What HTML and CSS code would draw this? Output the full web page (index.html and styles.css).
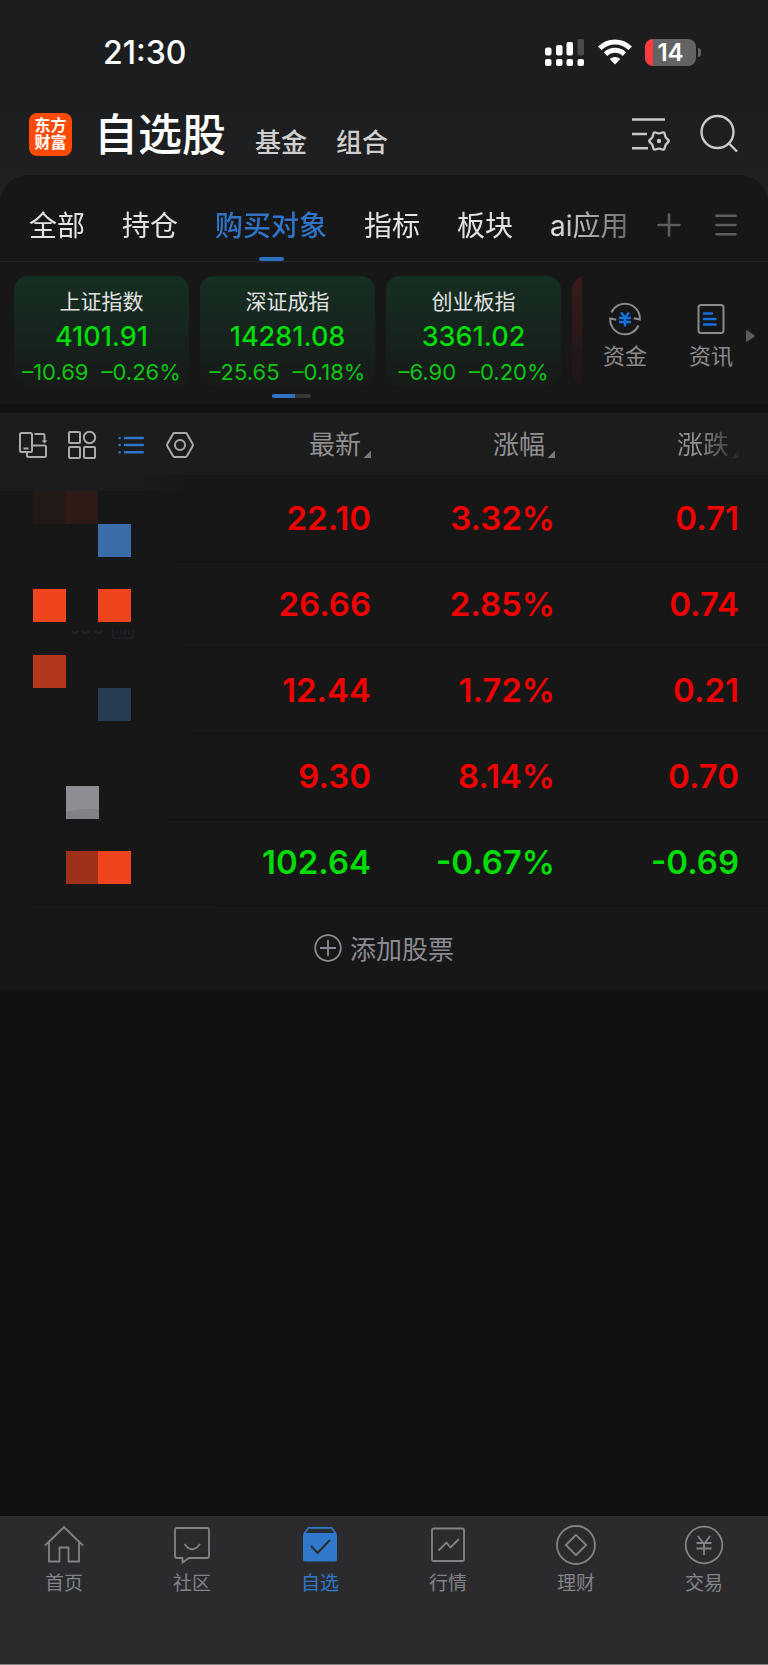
FILE: index.html
```html
<!DOCTYPE html>
<html lang="zh-CN">
<head>
    <meta charset="UTF-8">
    <meta name="viewport" content="width=device-width, initial-scale=1.0">
    <title>自选股</title>
    <link rel="stylesheet" href="styles.css">
</head>
<body>
    <header class="top">
        <div class="status">
            <time class="clock">21:30</time>
            <svg class="signal" width="39" height="27" viewBox="0 0 39 27">
                <g fill="#fff">
                    <rect x="0" y="8.500" width="6.500" height="8" rx="2"/>
                    <rect x="11" y="6" width="6.500" height="10.500" rx="2"/>
                    <rect x="21.500" y="3" width="6.500" height="13.500" rx="2"/>
                    <rect x="0" y="20" width="6.500" height="7" rx="2"/>
                    <rect x="11" y="20" width="6.500" height="7" rx="2"/>
                    <rect x="21.500" y="20" width="6.500" height="7" rx="2"/>
                    <rect x="32.500" y="20" width="6.500" height="7" rx="2"/>
                </g>
                <rect x="32.500" y="0" width="6.500" height="16.500" rx="2" fill="#4a4b4d"/>
            </svg>
            <svg class="wifi" width="34" height="26" viewBox="0 0 34 26">
                <g fill="none" stroke="#fff" stroke-width="5">
                    <path d="M1.800 9.200a21.500 21.500 0 0 1 30.400 0"/>
                    <path d="M7.600 15.200a13.300 13.300 0 0 1 18.800 0"/>
                </g>
                <path d="M17 25.500l-5.300-5.400a7.500 7.500 0 0 1 10.600 0z" fill="#fff"/>
            </svg>
            <div class="battery"><span class="battery-level"></span>14</div>
        </div>
        <div class="nav">
            <div class="logo">东方<br>财富</div>
            <h1>自选股</h1>
            <a class="nav-link" href="#">基金</a>
            <a class="nav-link" href="#">组合</a>
            <button class="icon-btn nav-filter" type="button" aria-label="筛选设置">
                <svg width="38" height="38" viewBox="0 0 38 38" fill="none" stroke="#c9c9c9" stroke-width="2.400">
                    <path d="M0 4.500h33M0 19h15M0 33.300h16"/>
                    <g transform="translate(27 26)">
                        <path d="M8.500-1.750Q11 0 8.500 1.750Q6.100 3.500 5.800 6.500Q5.500 9.500 2.750 8.250Q0 7-2.750 8.250Q-5.500 9.500-5.800 6.500Q-6.100 3.500-8.500 1.750Q-11 0-8.500-1.750Q-6.100-3.500-5.800-6.500Q-5.500-9.500-2.750-8.250Q0-7 2.750-8.250Q5.500-9.500 5.800-6.500Q6.100-3.500 8.500-1.750z"/>
                        <circle r="2.200" fill="#c9c9c9" stroke="none"/>
                    </g>
                </svg>
            </button>
            <button class="icon-btn" type="button" aria-label="搜索">
                <svg width="38" height="38" viewBox="0 0 38 38" fill="none" stroke="#c9c9c9" stroke-width="2.400">
                    <circle cx="17.500" cy="17" r="16"/>
                    <path d="M28.500 28l8.500 8.500"/>
                </svg>
            </button>
        </div>
    </header>

    <main>
        <section class="panel">
            <nav class="tabs">
                <div class="tab-list">
                    <a href="#">全部</a>
                    <a href="#">持仓</a>
                    <a class="active" href="#">购买对象</a>
                    <a href="#">指标</a>
                    <a href="#">板块</a>
                    <a href="#">ai应用</a>
                </div>
                <div class="tab-tools">
                    <button class="icon-btn" type="button" aria-label="添加分组">
                        <svg width="24" height="24" viewBox="0 0 24 24" stroke="#5e5e60" stroke-width="2.600" stroke-linecap="round"><path d="M12 1.500v21M1.500 12h21"/></svg>
                    </button>
                    <button class="icon-btn" type="button" aria-label="分组管理">
                        <svg width="24" height="24" viewBox="0 0 24 24" stroke="#5e5e60" stroke-width="2.600" stroke-linecap="round"><path d="M2.500 2.800h19M2.500 12h19M2.500 21.200h19"/></svg>
                    </button>
                </div>
            </nav>

            <div class="market">
                <div class="indices">
                    <div class="cards">
                        <div class="card">
                            <h2>上证指数</h2>
                            <strong>4101.91</strong>
                            <p><span>–10.69</span><span>–0.26%</span></p>
                        </div>
                        <div class="card">
                            <h2>深证成指</h2>
                            <strong>14281.08</strong>
                            <p><span>–25.65</span><span>–0.18%</span></p>
                        </div>
                        <div class="card">
                            <h2>创业板指</h2>
                            <strong>3361.02</strong>
                            <p><span>–6.90</span><span>–0.20%</span></p>
                        </div>
                        <div class="card up"></div>
                    </div>
                    <div class="pager"></div>
                </div>
                <div class="shortcuts">
                    <a href="#">
                        <svg width="34" height="34" viewBox="0 0 34 34" fill="none" stroke="#8b8b8d" stroke-width="2">
                            <path d="M3.500 10.500A14.800 14.800 0 0 1 31.800 17.500l-6-1.300"/>
                            <path d="M30.500 23.500A14.800 14.800 0 0 1 2.200 16.500l6 1.300"/>
                            <path d="M13 10.500l4 5 4-5M11 16h12M11 20h12M17 15.500v9" stroke="#1672dc" stroke-width="2.400"/>
                        </svg>
                        资金
                    </a>
                    <a href="#">
                        <svg width="34" height="34" viewBox="0 0 34 34" fill="none" stroke="#8b8b8d" stroke-width="2">
                            <rect x="4.500" y="3" width="25" height="28" rx="2.500"/>
                            <path d="M10 11.500h8M10 17h11.500M10 22.500h11.500" stroke="#1672dc" stroke-width="2.400" stroke-linecap="round"/>
                        </svg>
                        资讯
                    </a>
                    <svg class="more" width="9" height="12" viewBox="0 0 9 12" fill="#5a5a5c"><path d="M0 1q0-1.200 1.200-.7L8.500 5.200q.8.700 0 1.500L1.200 11.500Q0 12 0 11z"/></svg>
                </div>
            </div>
        </section>

        <section class="stocks">
            <table>
                <thead>
                    <tr>
                        <th class="first">
                            <div class="views">
                                <button class="icon-btn" type="button" aria-label="横屏">
                                    <svg width="28" height="28" viewBox="0 0 28 28" fill="none" stroke="#aaa" stroke-width="2">
                                        <rect x="1" y="2" width="12" height="19" rx="1.500"/>
                                        <path d="M4.500 17.500h5M15.500 3h8.500q1.500 0 1.500 1.500v6M13 14.500h12.500q1.500 0 1.500 1.500v8.500q0 1.500-1.500 1.500h-16Q8 26 8 24.500v-3.500"/>
                                        <path d="M22.500 9.500h6L25.500 12.500z" fill="#aaa" stroke="none"/>
                                    </svg>
                                </button>
                                <button class="icon-btn" type="button" aria-label="宫格">
                                    <svg width="28" height="28" viewBox="0 0 28 28" fill="none" stroke="#aaa" stroke-width="2">
                                        <rect x="1" y="1" width="11" height="11" rx="1"/>
                                        <circle cx="21.500" cy="6.500" r="5.700"/>
                                        <rect x="1" y="16" width="11" height="11" rx="1"/>
                                        <rect x="16" y="16" width="11" height="11" rx="1"/>
                                    </svg>
                                </button>
                                <button class="icon-btn" type="button" aria-label="列表">
                                    <svg width="28" height="28" viewBox="0 0 28 28" stroke="#2f74c8" stroke-width="2.400" stroke-linecap="round">
                                        <path d="M8 7h18M8 14h18M8 21.200h18M2.500 7h.2M2.500 14h.2M2.500 21.200h.2"/>
                                    </svg>
                                </button>
                                <button class="icon-btn" type="button" aria-label="设置">
                                    <svg width="28" height="28" viewBox="0 0 28 28" fill="none" stroke="#aaa" stroke-width="2" stroke-linejoin="round">
                                        <path d="M8.500 2h11q1 0 1.500.9l5.700 10.100q.6 1 0 2L21 25.100q-.5.900-1.500.9h-11Q7.500 26 7 25.100L1.300 15q-.6-1 0-2L7 2.900Q7.500 2 8.500 2z"/>
                                        <circle cx="14" cy="14" r="5"/>
                                    </svg>
                                </button>
                            </div>
                        </th>
                        <th><span class="sort">最新</span></th>
                        <th><span class="sort">涨幅</span></th>
                        <th><span class="sort fade">涨跌</span></th>
                    </tr>
                </thead>
                <tbody>
                    <tr>
                        <!-- 名称打码 -->
                        <td class="names" rowspan="5">
                            <svg width="216" height="429" viewBox="0 0 216 429">
                                <defs>
                                    <linearGradient id="haze"><stop offset="0.700" stop-color="#1c1c1c"/><stop offset="1" stop-color="#171717"/></linearGradient>
                                </defs>
                                <rect x="0" y="0" width="192" height="16" fill="url(#haze)"/>
                                <path d="M176 86.500h40M184 172.500h32M190 258.500h26M170 344.500h46M30 429.500h186" stroke="#111"/>
                                <rect x="33" y="16" width="33" height="33" fill="#231916"/>
                                <rect x="66" y="16" width="32" height="33" fill="#2e1b15"/>
                                <rect x="98" y="49" width="33" height="33" fill="#3a6da8"/>
                                <rect x="33" y="114" width="33" height="33" fill="#f0441e"/>
                                <rect x="98" y="114" width="33" height="33" fill="#f0441e"/>
                                <g fill="none" stroke="#262628" stroke-width="1.500">
                                    <path d="M72 156q3 4 6 0M82 156q4 5 8 0M94 156q4 5 8 0"/>
                                    <path d="M113 154v9h20v-9M117 156v4M121 155v4h4v-4M129 155v5" stroke="#1e222b"/>
                                </g>
                                <rect x="33" y="180" width="33" height="33" fill="#b3371c"/>
                                <rect x="98" y="213" width="33" height="33" fill="#273b53"/>
                                <rect x="66" y="311" width="33" height="33" fill="#8e8d93"/>
                                <path d="M66 337q16-4 33-3v10H66z" fill="#828187"/>
                                <rect x="66" y="376" width="32" height="33" fill="#9f311b"/>
                                <rect x="98" y="376" width="33" height="33" fill="#f0441e"/>
                            </svg>
                        </td>
                        <td>22.10</td>
                        <td>3.32%</td>
                        <td>0.71</td>
                    </tr>
                    <tr>
                        <td>26.66</td>
                        <td>2.85%</td>
                        <td>0.74</td>
                    </tr>
                    <tr>
                        <td>12.44</td>
                        <td>1.72%</td>
                        <td>0.21</td>
                    </tr>
                    <tr>
                        <td>9.30</td>
                        <td>8.14%</td>
                        <td>0.70</td>
                    </tr>
                    <tr class="down">
                        <td>102.64</td>
                        <td>-0.67%</td>
                        <td>-0.69</td>
                    </tr>
                </tbody>
            </table>
            <button class="add" type="button">
                <svg width="28" height="28" viewBox="0 0 28 28" fill="none" stroke="#8b8a90" stroke-width="1.800"><circle cx="14" cy="14" r="12.800"/><path d="M14 6v16M6 14h16"/></svg>
                添加股票
            </button>
        </section>
    </main>

    <nav class="bottom">
        <a href="#">
            <svg width="40" height="40" viewBox="0 0 40 40"><path d="M1 20.500L20 2l19 18.500M5 17v19.500h10.500V22.500h9v14H35V17"/></svg>
            首页
        </a>
        <a href="#">
            <svg width="40" height="40" viewBox="0 0 40 40"><path d="M5 3h30q2 0 2 2v26q0 2-2 2H17l-6.500 4.500V33H5q-2 0-2-2V5q0-2 2-2zM12.500 19q7.500 10.500 15.500 0"/></svg>
            社区
        </a>
        <a class="active" href="#">
            <svg width="40" height="40" viewBox="0 0 40 40">
                <path d="M4 9l4.500-6.200h23L36 9"/>
                <rect class="solid" x="3" y="8" width="34" height="28.500" rx="2.500"/>
                <path class="tick" d="M11 21l6.500 7L30 15"/>
            </svg>
            自选
        </a>
        <a href="#">
            <svg width="40" height="40" viewBox="0 0 40 40"><rect x="4" y="3.500" width="32" height="32.500" rx="1.500"/><path d="M10.500 25.500l8-8 4 5 8.500-8.500"/></svg>
            行情
        </a>
        <a href="#">
            <svg width="40" height="40" viewBox="0 0 40 40"><circle cx="20" cy="20" r="19"/><path d="M20 9.800L30.200 20 20 30.200 9.800 20z"/></svg>
            理财
        </a>
        <a href="#">
            <svg width="40" height="40" viewBox="0 0 40 40"><circle cx="20" cy="20" r="18.300"/><path d="M14 11l6 8 6-8M12.500 18h15M12.500 23.500h15M20 19v11"/></svg>
            交易
        </a>
    </nav>
</body>
</html>
```
FILE: styles.css
```css
* {
    box-sizing: border-box;
}
body {
    min-height: 100vh;
    margin: 0;
    display: flex;
    flex-direction: column;
    background-color: #111;
    color: #e2e2e2;
    font-family: Inter, "Noto Sans CJK SC", sans-serif;
}
a {
    color: inherit;
    text-decoration: none;
}
svg {
    display: block;
    flex: none;
    overflow: visible;
}
h1, h2, p {
    margin: 0;
}
.icon-btn {
    padding: 0;
    border: none;
    background: none;
    cursor: pointer;
}

/* 顶部 */
.top {
    height: 203px;
    margin-bottom: -28px;
    background: linear-gradient(#1c1d1f 50%, #212122);
}
.status {
    height: 104px;
    padding: 0 72px 0 103px;
    display: flex;
    align-items: center;
}
.clock {
    margin-right: auto;
    color: #fff;
    font-size: 32px;
    font-weight: 500;
}
.wifi {
    margin: 0 13px 0 14px;
}
.battery {
    position: relative;
    width: 51px;
    height: 27px;
    border-radius: 8px;
    background: linear-gradient(90deg, #ff3b40 8px, #636365 8px);
    color: #fff;
    font-size: 24px;
    font-weight: 600;
    line-height: 27px;
    text-align: center;
}
.battery-level {
    position: absolute;
    top: 9px;
    right: -5px;
    width: 3px;
    height: 9px;
    border-radius: 0 3px 3px 0;
    background-color: #636365;
}
.nav {
    height: 60px;
    padding: 0 30px 0 29px;
    display: flex;
    align-items: center;
}
.logo {
    width: 43px;
    height: 43px;
    padding-top: 4px;
    border-radius: 8px;
    background-color: #ff4a06;
    color: #fff;
    font-size: 16px;
    font-weight: 700;
    line-height: 17px;
    text-align: center;
}
.nav h1 {
    margin-left: 22px;
    padding-top: 2px;
    color: #fff;
    font-size: 44px;
    font-weight: 500;
    line-height: 58px;
}
.nav-link {
    margin-left: 29px;
    padding-top: 18px;
    color: #cfcfcf;
    font-size: 26px;
    font-weight: 500;
    line-height: 32px;
}
.nav-filter {
    margin-left: auto;
    margin-right: 30px;
}

/* 分组 */
.panel {
    height: 229px;
    border-radius: 28px 28px 0 0;
    background-color: #171717;
}
.tabs {
    height: 87px;
    padding-right: 30px;
    display: flex;
    align-items: stretch;
    justify-content: space-between;
    border-bottom: 1px solid #262626;
}
.tab-list {
    padding-left: 29px;
    display: flex;
    gap: 37px;
    font-size: 28px;
    line-height: 102px;
    white-space: nowrap;
    -webkit-mask-image: linear-gradient(90deg, #000 88%, rgba(0, 0, 0, 0.4));
    mask-image: linear-gradient(90deg, #000 88%, rgba(0, 0, 0, 0.4));
}
.tab-list .active {
    position: relative;
    color: #3072c4;
    font-weight: 500;
}
.tab-list .active::after {
    content: "";
    position: absolute;
    bottom: 0;
    left: calc(50% - 12px);
    width: 25px;
    height: 4px;
    border-radius: 2px;
    background-color: #3072c4;
}
.tab-tools {
    padding-top: 14px;
    display: flex;
    align-items: center;
    gap: 33px;
}

/* 指数 */
.market {
    display: flex;
}
.indices {
    flex: 1;
    min-width: 0;
    padding-top: 14px;
}
.cards {
    padding-left: 14px;
    display: flex;
    gap: 11px;
    overflow: hidden;
}
.card {
    flex: none;
    width: 175px;
    height: 111px;
    padding-top: 10px;
    border-radius: 14px;
    background: linear-gradient(#152f22, #171a18);
    text-align: center;
    white-space: nowrap;
}
.card.up {
    background: linear-gradient(#3a1a1c, #1c1718);
}
.card h2 {
    font-size: 21px;
    font-weight: 400;
    line-height: 32px;
}
.card strong {
    display: block;
    color: #02dc06;
    font-size: 27px;
    font-weight: 500;
    line-height: 37px;
}
.card p {
    display: flex;
    justify-content: center;
    gap: 13px;
    color: #10c412;
    font-size: 22px;
    line-height: 34px;
}
.pager {
    width: 39px;
    height: 4px;
    margin: 7px auto 0;
    border-radius: 2px;
    background: linear-gradient(90deg, #3072c4 23px, #363636 23px);
}
.shortcuts {
    width: 186px;
    padding: 40px 14px 0 20px;
    display: flex;
    align-items: flex-start;
    color: #8b8b8d;
}
.shortcuts a {
    flex: none;
    width: 86px;
    display: flex;
    flex-direction: column;
    align-items: center;
    gap: 4px;
    font-size: 22px;
    line-height: 32px;
}
.shortcuts a:first-child {
    width: 46px;
    margin-right: 20px;
}
.shortcuts .more {
    margin: 28px 0 0 -8px;
}

/* 自选列表 */
.stocks {
    margin-top: 9px;
    background-color: #171717;
}
table {
    width: 100%;
    border-collapse: collapse;
    table-layout: fixed;
}
th, td {
    padding: 2px 29px 0 0;
    text-align: right;
}
th {
    height: 62px;
    background-color: #1c1c1c;
    color: #8f8f91;
    font-size: 26px;
    font-weight: 400;
}
.first {
    width: 216px;
    padding: 1px 0 0 19px;
}
.views {
    display: flex;
    gap: 21px;
}
.sort {
    display: inline-block;
    padding-right: 10px;
    line-height: 40px;
    background: linear-gradient(135deg, transparent 50%, #77777a 50%) right 0 bottom 7px / 7px 7px no-repeat;
}
.fade {
    -webkit-mask-image: linear-gradient(90deg, #000 35%, rgba(0, 0, 0, 0.100));
    mask-image: linear-gradient(90deg, #000 35%, rgba(0, 0, 0, 0.100));
}
td {
    height: 86px;
    padding-top: 0;
    border-bottom: 1px solid #111;
    color: #f00000;
    font-size: 33px;
    font-weight: 600;
}
.down td {
    color: #02dc06;
}
.names {
    padding: 0;
    border-bottom: none;
    vertical-align: top;
}
.add {
    width: 100%;
    height: 84px;
    padding: 0;
    display: flex;
    align-items: center;
    justify-content: center;
    gap: 8px;
    border: none;
    background: none;
    color: #8b8a90;
    font-family: inherit;
    font-size: 26px;
    cursor: pointer;
}

/* 底部导航 */
.bottom {
    height: 149px;
    margin-top: auto;
    padding-top: 9px;
    display: flex;
    border-bottom: 1px solid #828083;
    background-color: #2b2b2d;
    color: #838288;
}
.bottom a {
    flex: 1;
    display: flex;
    flex-direction: column;
    align-items: center;
    gap: 5px;
    font-size: 19px;
    line-height: 28px;
}
.bottom svg {
    fill: none;
    stroke: currentColor;
    stroke-width: 1.8;
}
.bottom .active {
    color: #2f78cc;
}
.bottom .solid {
    fill: currentColor;
    stroke: none;
}
.bottom .tick {
    stroke: #2b2b2d;
    stroke-width: 2;
}
```
